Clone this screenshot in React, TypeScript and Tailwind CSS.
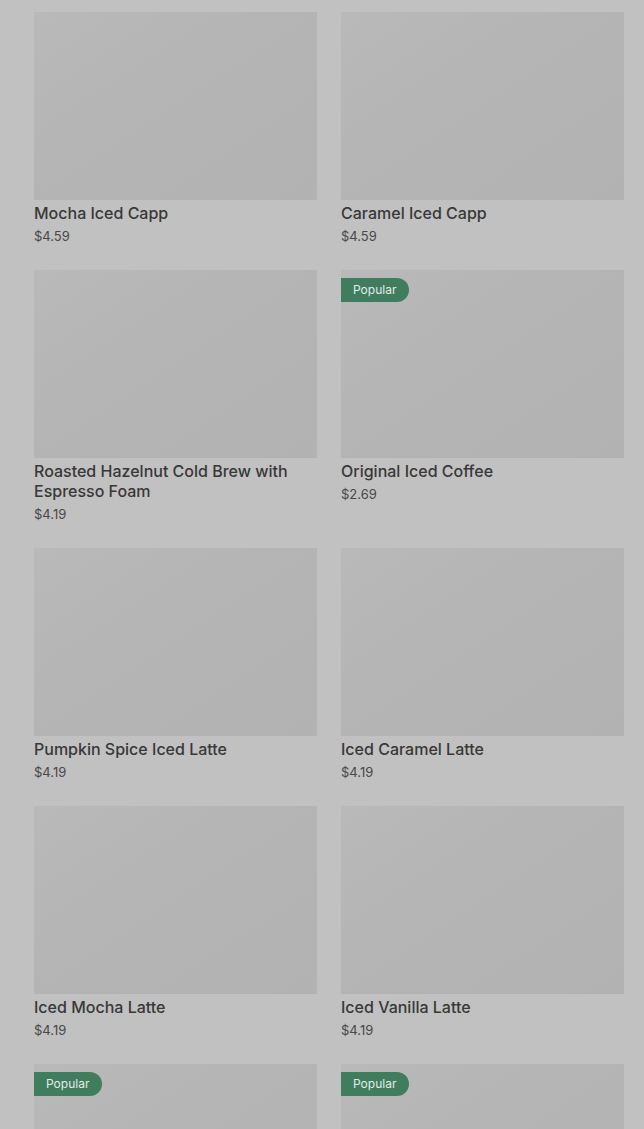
import React from "react";

type Item = { name: string; price: string; popular?: boolean };

const items: Item[] = [
  { name: "Mocha Iced Capp", price: "$4.59" },
  { name: "Caramel Iced Capp", price: "$4.59" },
  { name: "Roasted Hazelnut Cold Brew with Espresso Foam", price: "$4.19" },
  { name: "Original Iced Coffee", price: "$2.69", popular: true },
  { name: "Pumpkin Spice Iced Latte", price: "$4.19" },
  { name: "Iced Caramel Latte", price: "$4.19" },
  { name: "Iced Mocha Latte", price: "$4.19" },
  { name: "Iced Vanilla Latte", price: "$4.19" },
  { name: "Iced Shaken Espresso", price: "$4.19", popular: true },
  { name: "Iced Brown Sugar Oat", price: "$4.19", popular: true },
];

export default function App() {
  return (
    <div
      className="h-[1129px] overflow-hidden bg-[#c1c1c1] pl-[34px] pr-[20px] pt-[12px]"
      style={{ fontFamily: "Inter, 'Noto Sans', sans-serif" }}
    >
      <div className="grid grid-cols-2 gap-x-[24px] gap-y-[24px]">
        {items.map((it, i) => (
          <div key={i} className="flex flex-col">
            <div className="relative h-[188px] w-full bg-gradient-to-br from-[#b9b9b9] via-[#b4b4b4] to-[#b2b2b2]">
              {it.popular && (
                <span className="absolute left-0 top-[8px] flex h-[24px] items-center rounded-r-full bg-[#3f7d5e] pl-[12px] pr-[13px] text-[12px] text-[#e3ebe7]">
                  Popular
                </span>
              )}
            </div>
            <div className="mt-[3px] text-[16px] font-medium leading-[20px] text-[#383838]">
              {it.name}
            </div>
            <div className="mt-[3px] text-[13px] leading-[20px] text-[#484848]">
              {it.price}
            </div>
          </div>
        ))}
      </div>
    </div>
  );
}
